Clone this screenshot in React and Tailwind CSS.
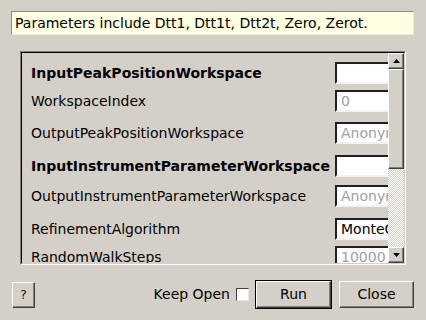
import React from 'react';

// Qt-style algorithm dialog: property list inside a sunken scroll area

const rows = [
  { label: 'InputPeakPositionWorkspace', bold: true, value: '', h: 'h-[28px]' },
  { label: 'WorkspaceIndex', value: '0', muted: true, h: 'h-[32px]' },
  { label: 'OutputPeakPositionWorkspace', value: 'Anonymous', muted: true, h: 'h-[33px]' },
  { label: 'InputInstrumentParameterWorkspace', bold: true, value: '', h: 'h-[30px]' },
  { label: 'OutputInstrumentParameterWorkspace', value: 'Anonymous', muted: true, h: 'h-[33px]' },
  { label: 'RefinementAlgorithm', value: 'MonteCarlo', h: 'h-[28px]' },
  { label: 'RandomWalkSteps', value: '10000', muted: true, h: 'h-[22px]' },
];

const raised =
  'border border-t-white border-l-white border-r-[#404040] border-b-[#404040] shadow-[inset_-1px_-1px_0_#808080]';

const Field = ({ value, muted }) => (
  <div className="w-[70px] h-[22px] shrink-0 bg-white border-2 border-t-[#202020] border-l-[#202020] border-r-[#e6e4df] border-b-[#f4f3f0] pl-[4px] flex items-center overflow-hidden whitespace-nowrap">
    <span className={muted ? 'text-[#a0a0a0]' : 'text-black'}>{value}</span>
  </div>
);

const Arrow = ({ up }) => (
  <svg width="7" height="4" viewBox="0 0 7 4">
    {up ? <polygon points="3.5,0 7,4 0,4" fill="#000" /> : <polygon points="0,0 7,0 3.5,4" fill="#000" />}
  </svg>
);

const ScrollBar = () => (
  <div className="w-[16px] shrink-0 flex flex-col">
    <div className={`h-[16px] flex items-center justify-center bg-[#d4d0c8] ${raised}`}>
      <Arrow up />
    </div>
    <div className={`h-[100px] bg-[#d4d0c8] ${raised}`} />
    <div className="flex-1 bg-[repeating-conic-gradient(#ffffff_0_25%,#d4d0c8_0_50%)] bg-[length:2px_2px]" />
    <div className={`h-[16px] flex items-center justify-center bg-[#d4d0c8] ${raised}`}>
      <Arrow />
    </div>
  </div>
);

export default function App() {
  return (
    <div className="w-[426px] h-[320px] bg-[#d4d0c8] flex flex-col text-[14px] text-black font-['DejaVu_Sans',sans-serif] overflow-hidden">
      <div className="mt-[11px] ml-[11px] mr-[12px] h-[24px] bg-[#ffffe1] border border-t-[#8a8a8a] border-l-[#8a8a8a] border-r-[#e8e6e0] border-b-[#e8e6e0] pl-[3px] flex items-center whitespace-nowrap">
        Parameters include Dtt1, Dtt1t, Dtt2t, Zero, Zerot.
      </div>

      <div className="mt-[16px] mx-[20px] h-[214px] border border-t-[#808080] border-l-[#808080] border-r-white border-b-white">
        <div className="h-full flex border border-t-black border-l-black border-r-[#d4d0c8] border-b-[#d4d0c8]">
          <div className="flex-1 overflow-hidden pt-[9px] pl-[9px]">
            {rows.map((r) => (
              <div key={r.label} className={`${r.h} flex items-start shrink-0`}>
                <div className={`w-[304px] shrink-0 h-[22px] flex items-center whitespace-nowrap ${r.bold ? 'font-bold' : ''}`}>
                  {r.label}
                </div>
                <Field value={r.value} muted={r.muted} />
              </div>
            ))}
          </div>
          <ScrollBar />
        </div>
      </div>

      <div className="mt-[15px] flex items-center pl-[12px] pr-[12px]">
        <button className={`w-[23px] h-[26px] mt-[1px] bg-[#d4d0c8] text-[13px] text-[#222] flex items-center justify-center ${raised}`}>
          ?
        </button>
        <div className="flex-1" />
        <span className="whitespace-nowrap">Keep Open</span>
        <div className="ml-[6px] w-[13px] h-[13px] bg-white border border-t-[#404040] border-l-[#404040] border-r-[#e8e6e0] border-b-[#e8e6e0]" />
        <div className="ml-[6px] w-[77px] h-[29px] border border-black">
          <button className={`w-full h-full bg-[#d4d0c8] flex items-center justify-center ${raised}`}>Run</button>
        </div>
        <button className={`ml-[7px] w-[75px] h-[27px] bg-[#d4d0c8] flex items-center justify-center ${raised}`}>
          Close
        </button>
      </div>
    </div>
  );
}
